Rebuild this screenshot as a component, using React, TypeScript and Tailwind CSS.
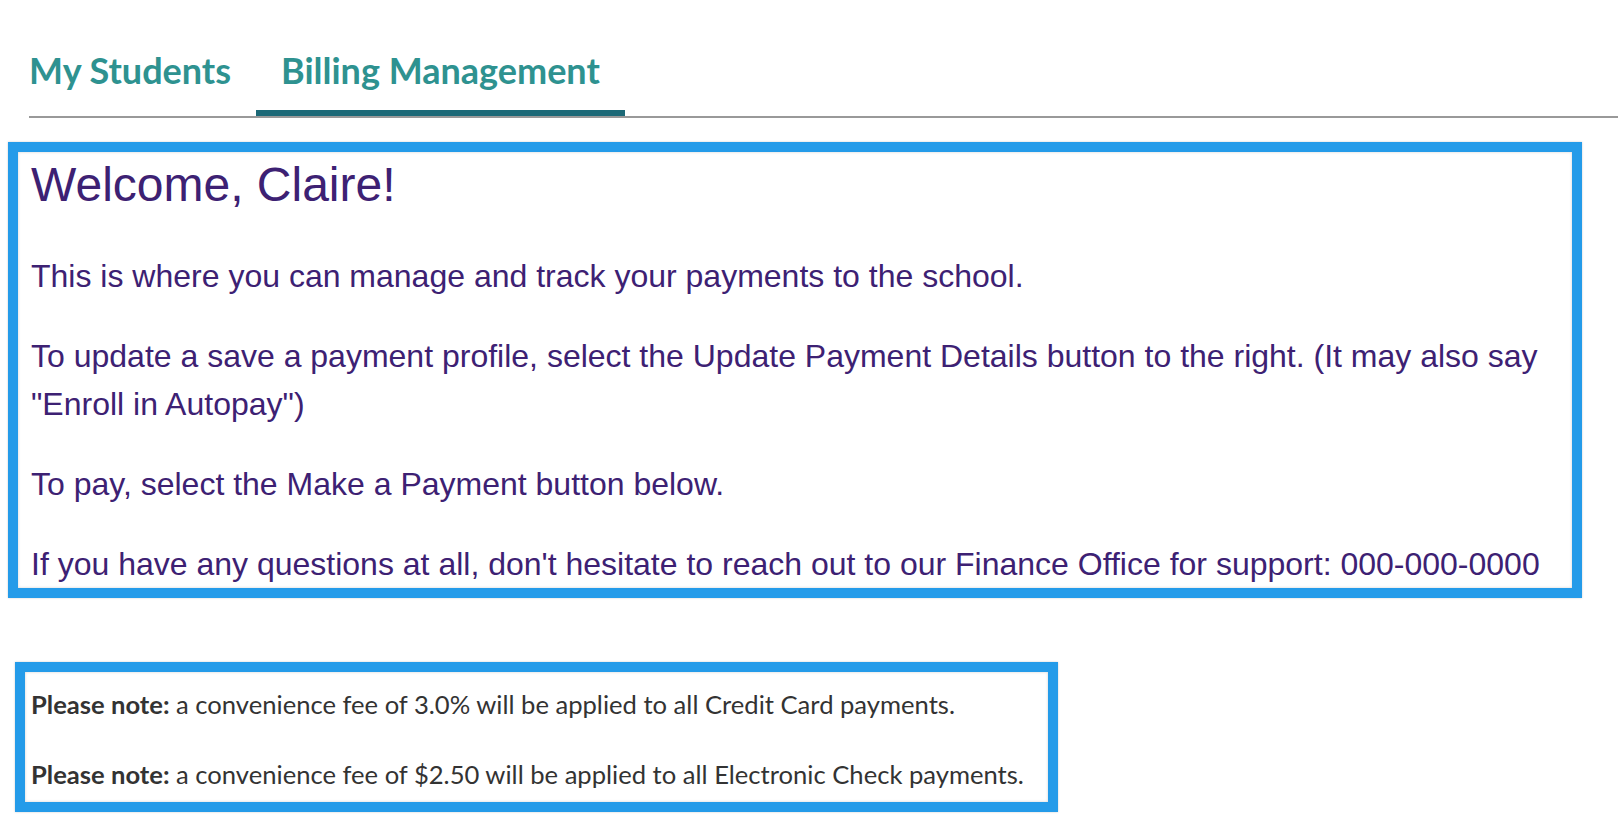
import React from 'react'

const tabs = [
  { id: 'students', label: 'My Students' },
  { id: 'billing', label: 'Billing Management' },
]

const paragraphs = [
  'This is where you can manage and track your payments to the school.',
  'To update a save a payment profile, select the Update Payment Details button to the right. (It may also say "Enroll in Autopay")',
  'To pay, select the Make a Payment button below.',
  "If you have any questions at all, don't hesitate to reach out to our Finance Office for support: 000-000-0000",
]

const fees = [
  'a convenience fee of 3.0% will be applied to all Credit Card payments.',
  'a convenience fee of $2.50 will be applied to all Electronic Check payments.',
]

export default function App() {
  const activeTab = 'billing'

  return (
    <div className="min-h-screen bg-white">
      {/* Tabs */}
      <nav className="pt-[49px] pl-[29px] font-['Lato','Noto_Sans',sans-serif]">
        <ul className="flex border-b-2 border-[#999999]">
          {tabs.map((tab, i) => {
            const isActive = tab.id === activeTab
            return (
              <li
                key={tab.id}
                className={`text-[36px] font-bold leading-[43px] text-[#2e9290] ${i === 0 ? 'pr-[25px]' : 'px-[25px]'} ${
                  isActive ? 'pb-[18px] border-b-[6px] border-[#1c6977]' : 'pb-[24px]'
                }`}
              >
                {tab.label}
              </li>
            )
          })}
        </ul>
      </nav>

      {/* Welcome box */}
      <section className="mt-[24px] ml-[8px] mr-[36px] border-[10px] border-[#249be9] shadow-[0_0_2px_rgba(0,0,0,0.2)]">
        <div className="pl-[13px] pr-[12px] pt-[4px] shadow-[inset_0_0_3px_rgba(0,0,0,0.18)] font-['Liberation_Sans',Arial,sans-serif] text-[#3d2173]">
          <h1 className="text-[48px] leading-[58px] mb-[38px]">Welcome, Claire!</h1>
          <div className="flex flex-col gap-[32px]">
            {paragraphs.map((p) => (
              <p key={p} className="text-[32px] leading-[48px]">
                {p}
              </p>
            ))}
          </div>
        </div>
      </section>

      {/* Fee notes */}
      <section className="mt-[64px] ml-[15px] w-[1043px] border-[10px] border-[#249be9] shadow-[0_0_2px_rgba(0,0,0,0.2)]">
        <div className="pl-[6px] pt-[13px] pb-[8px] flex flex-col gap-[32px] shadow-[inset_0_0_3px_rgba(0,0,0,0.18)] font-['Lato','Noto_Sans',sans-serif] text-[25.6px] leading-[38.4px] text-[#333333]">
          {fees.map((f) => (
            <p key={f}>
              <span className="font-bold">Please note:</span> {f}
            </p>
          ))}
        </div>
      </section>
    </div>
  )
}
